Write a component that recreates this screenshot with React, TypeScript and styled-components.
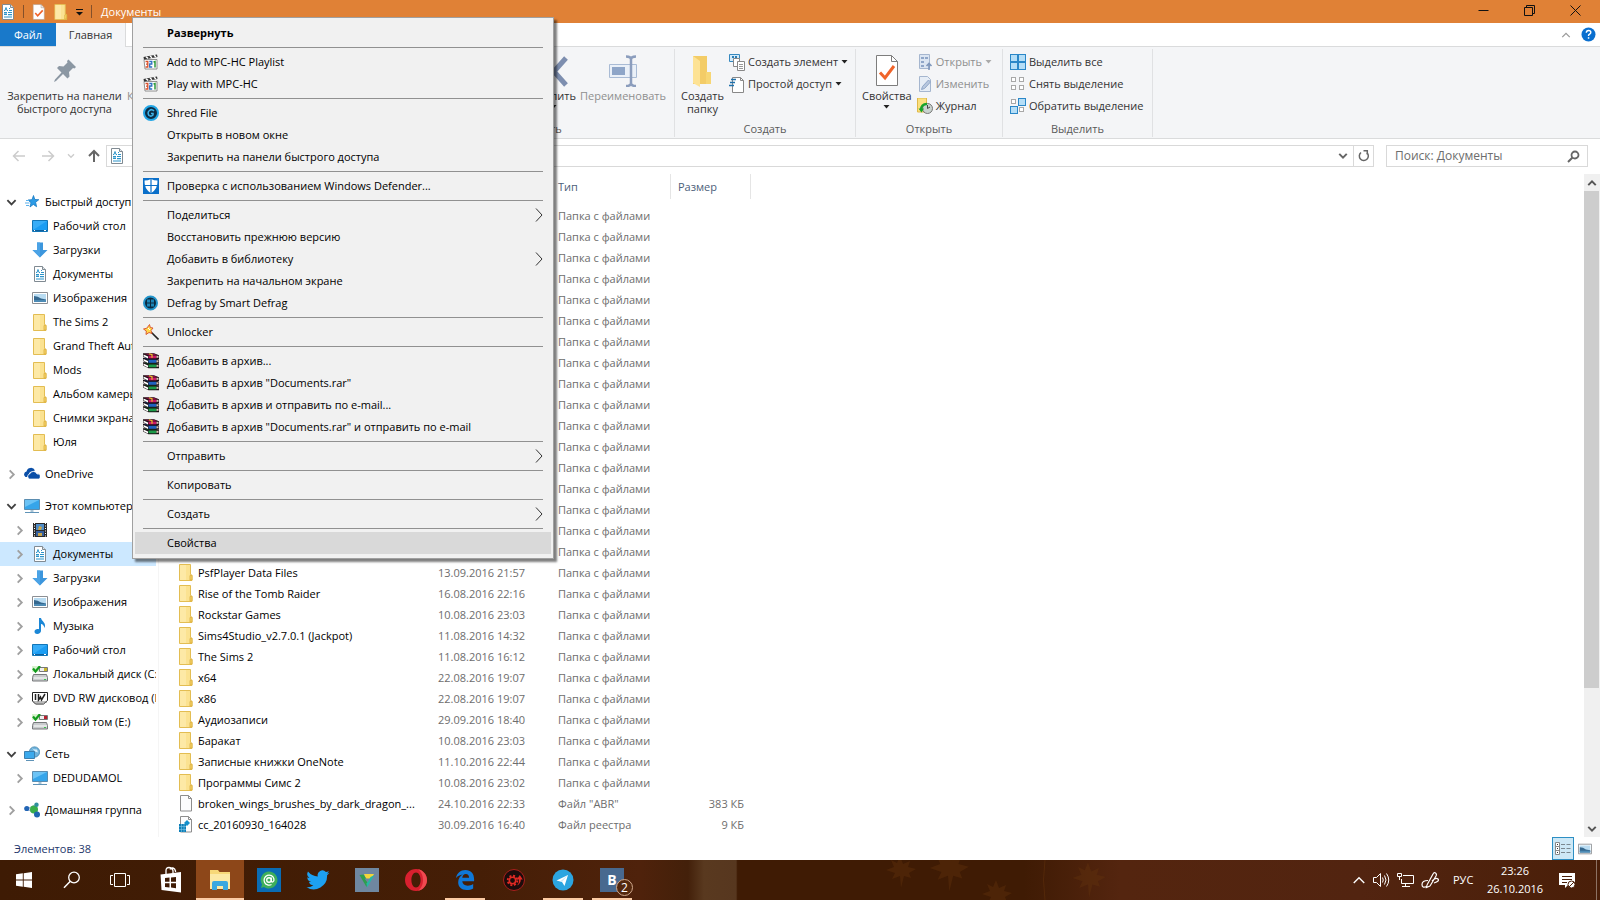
import React from "react";
import styled, { createGlobalStyle, css } from "styled-components";

const GlobalStyle = createGlobalStyle`
  *, *::before, *::after { box-sizing: border-box; }
  body { margin: 0; background: #fff; overflow: hidden; }
  body, button, input, table {
    font-family: "Open Sans", "Noto Sans", sans-serif;
    font-size: 11px;
    line-height: 16px;
    color: #000;
  }
  button { background: none; border: 0; padding: 0; margin: 0; text-align: left; white-space: nowrap; }
  svg { display: block; flex: none; }
  ul { list-style: none; margin: 0; padding: 0; }
`;

/* ---------- shell ---------- */

const Desktop = styled.div`
  position: relative;
  display: flex;
  flex-direction: column;
  height: 100vh;
  overflow: hidden;
`;

const TitleBar = styled.header`
  display: flex;
  align-items: center;
  flex: none;
  height: 23px;
  background: #e08136;
`;

const QuickAccess = styled.div`
  display: flex;
  align-items: center;
  gap: 7px;
  flex: 1;
`;

const QuickDivider = styled.span`
  width: 1px;
  height: 13px;
  background: #84502a;
`;

const WindowTitle = styled.h1`
  margin: 0 0 0 2px;
  font-size: 11px;
  font-weight: 400;
  color: #fff;
`;

const WindowControls = styled.div`
  display: flex;
  padding-right: 2px;
  button {
    display: flex;
    justify-content: center;
    width: 46px;
    padding-bottom: 3px;
  }
`;

/* ---------- ribbon ---------- */

const TabRow = styled.nav`
  display: flex;
  align-items: stretch;
  flex: none;
  height: 24px;
  border-bottom: 1px solid #dadbdc;
`;

const Tab = styled.button<{ $kind: "file" | "active" }>`
  text-align: center;
  ${(p) =>
    p.$kind === "file"
      ? css`
          width: 56px;
          background: #1979ca;
          color: #fff;
        `
      : css`
          width: 70px;
          background: #f4f5f7;
          color: #333;
          border-right: 1px solid #dadbdc;
          margin-bottom: -1px;
        `}
`;

const TabTools = styled.div`
  display: flex;
  align-items: center;
  gap: 10px;
  margin-left: auto;
  padding-right: 4px;
`;

const Ribbon = styled.div`
  display: flex;
  flex: none;
  height: 92px;
  background: #f4f5f7;
  border-bottom: 1px solid #dadbdc;
`;

const RibbonGroup = styled.section<{ $width: number; $plain?: boolean }>`
  display: flex;
  flex-direction: column;
  flex: none;
  width: ${(p) => p.$width}px;
  margin: 2px 0 1px;
  border-right: ${(p) => (p.$plain ? "0" : "1px solid #e0e1e3")};
`;

const GroupBody = styled.div<{ $end?: boolean }>`
  display: flex;
  flex: 1;
  justify-content: ${(p) => (p.$end ? "flex-end" : "flex-start")};
  padding: 2px ${(p) => (p.$end ? 6 : 4)}px 0;
`;

const GroupLabel = styled.div`
  height: 16px;
  text-align: center;
  color: #5a5a5a;
`;

const BigButton = styled.button<{ $dim?: boolean }>`
  display: flex;
  flex-direction: column;
  align-items: center;
  padding: 4px 2px 0;
  line-height: 13px;
  text-align: center;
  white-space: pre;
  color: ${(p) => (p.$dim ? "#8f8f8f" : "#333")};
  > svg { margin-bottom: 2px; }
  > svg + svg, > span + svg { margin: 3px 0 0; }
`;

const PinButton = styled(BigButton)`
  width: 121px;
`;

const SmallStack = styled.div`
  display: flex;
  flex-direction: column;
  align-items: flex-start;
  padding-left: 3px;
`;

const SmallButton = styled.button<{ $dim?: boolean }>`
  display: flex;
  align-items: center;
  gap: 3px;
  height: 22px;
  color: ${(p) => (p.$dim ? "#8f8f8f" : "#333")};
`;

/* ---------- address row ---------- */

const AddressRow = styled.div`
  display: flex;
  align-items: center;
  flex: none;
  height: 35px;
  padding: 0 12px 1px;
`;

const NavButtons = styled.div`
  display: flex;
  align-items: center;
  width: 94px;
  gap: 15px;
  button:nth-child(3) { margin: 0 -3px; }
`;

const AddressBox = styled.div`
  display: flex;
  align-items: center;
  flex: 1;
  height: 22px;
  margin-right: 12px;
  padding-left: 2px;
  border: 1px solid #d9d9d9;
  button {
    display: flex;
    align-items: center;
    justify-content: center;
    width: 20px;
    height: 20px;
  }
`;

const AddressSpace = styled.span`
  flex: 1;
`;

const RefreshButton = styled.button`
  border-left: 1px solid #d9d9d9;
`;

const SearchBox = styled.label`
  display: flex;
  align-items: center;
  width: 202px;
  height: 22px;
  padding: 0 7px 0 8px;
  border: 1px solid #d9d9d9;
  input {
    flex: 1;
    min-width: 0;
    padding: 0;
    border: 0;
    outline: 0;
    background: none;
    font-size: 12px;
  }
  input::placeholder { color: #6d6d6d; opacity: 1; }
`;

/* ---------- body ---------- */

const Body = styled.div`
  display: flex;
  flex: 1;
  min-height: 0;
`;

const Sidebar = styled.aside`
  flex: none;
  width: 159px;
  padding: 16px 2px 0 0;
  border-right: 1px solid #f5f5f5;
  overflow: hidden;
`;

const TreeGroup = styled.ul`
  margin-bottom: 8px;
`;

const TreeItem = styled.button<{ $level: number; $selected?: boolean }>`
  display: flex;
  align-items: center;
  width: 100%;
  height: 24px;
  padding-left: ${(p) => (p.$level ? 14 : 6)}px;
  overflow: hidden;
  background: ${(p) => (p.$selected ? "#cce8ff" : "transparent")};
  > svg + svg { margin: 0 5px 0 7px; }
`;

const Files = styled.main`
  flex: 1;
  min-width: 0;
  overflow: hidden;
`;

const FileTable = styled.table`
  width: 592px;
  table-layout: fixed;
  border-collapse: separate;
  border-spacing: 0;
  th {
    height: 25px;
    padding: 0 7px;
    font-weight: 400;
    text-align: left;
    color: #4c607a;
    border-right: 1px solid #e5e5e5;
  }
  th:empty { border: 0; }
  thead::after { content: ""; display: block; height: 6px; }
  td {
    height: 21px;
    padding: 0 7px;
    color: #6d6d6d;
    white-space: nowrap;
  }
  td:first-child { padding: 0 0 0 20px; color: #000; }
  td:last-child { text-align: right; }
`;

const FileName = styled.span`
  display: flex;
  align-items: center;
  gap: 5px;
`;

const Scrollbar = styled.div`
  display: flex;
  flex-direction: column;
  flex: none;
  width: 16px;
  background: #f0f0f0;
  button { display: flex; align-items: center; justify-content: center; height: 17px; }
`;

const Track = styled.div`
  flex: 1;
`;

const Thumb = styled.div`
  height: 79%;
  margin: 0 1px 0 0;
  background: #cdcdcd;
`;

const StatusBar = styled.footer`
  display: flex;
  align-items: center;
  flex: none;
  height: 23px;
  padding: 0 4px 0 14px;
  color: #23376b;
`;

const StatusText = styled.span`
  flex: 1;
`;

const ViewButton = styled.button<{ $on?: boolean }>`
  display: flex;
  align-items: center;
  justify-content: center;
  width: 22px;
  height: 23px;
  border: 1px solid ${(p) => (p.$on ? "#2d8fc4" : "transparent")};
  background: ${(p) => (p.$on ? "#cde8f6" : "transparent")};
`;

/* ---------- context menu ---------- */

const Menu = styled.div`
  position: absolute;
  left: 132px;
  top: 17px;
  width: 422px;
  padding: 4px 2px;
  background: #f1f1f1;
  border: 1px solid #a0a0a0;
  box-shadow: 3px 3px 2px rgba(0, 0, 0, 0.5);
`;

const MenuItem = styled.button<{ $bold?: boolean; $hover?: boolean }>`
  display: flex;
  align-items: center;
  width: 100%;
  height: 22px;
  padding: 0 8px;
  font-weight: ${(p) => (p.$bold ? 700 : 400)};
  background: ${(p) => (p.$hover ? "#d9d9d9" : "transparent")};
`;

const MenuIcon = styled.span`
  width: 16px;
  margin-right: 8px;
`;

const MenuText = styled.span`
  flex: 1;
`;

const MenuLine = styled.hr`
  height: 1px;
  margin: 3px 8px;
  border: 0;
  background: #919191;
`;

/* ---------- taskbar ---------- */

const Taskbar = styled.footer`
  position: relative;
  display: flex;
  flex: none;
  height: 40px;
  background: linear-gradient(90deg, #3e1b04 0%, #451e06 30%, #4f220b 40%, #43200a 43%, #59391f 44%, #57371f 46%, #3f1b04 46.1%, #3f1b04 64%, #54250f 70%, #522410 85%, #4a1f09 100%);
`;

const TaskbarArt = styled.svg`
  position: absolute;
  left: 50%;
  top: 0;
`;

const TaskButtons = styled.div`
  display: flex;
`;

const AppButtons = styled.div`
  display: flex;
  gap: 1px;
  margin-left: 3px;
`;

const TaskButton = styled.button<{ $open?: boolean; $current?: boolean }>`
  position: relative;
  display: flex;
  align-items: center;
  justify-content: center;
  width: 48px;
  height: 40px;
  background: ${(p) => (p.$current ? "#8d4719" : "transparent")};
  &::after {
    content: "";
    display: ${(p) => (p.$open || p.$current ? "block" : "none")};
    position: absolute;
    left: ${(p) => (p.$current ? 0 : 4)}px;
    right: ${(p) => (p.$current ? 0 : 4)}px;
    bottom: 0;
    height: 2px;
    background: #fbcba4;
  }
`;

const Badge = styled.span`
  position: absolute;
  left: 28px;
  top: 19px;
  width: 17px;
  height: 17px;
  border: 1px solid #d0a88c;
  border-radius: 9px;
  background: #54280d;
  color: #fff;
  font-size: 12px;
  line-height: 15px;
  text-align: center;
`;

const Tray = styled.div`
  position: relative;
  display: flex;
  align-items: center;
  margin-left: auto;
  color: #fff;
  button { color: #fff; }
`;

const TrayIcons = styled.div`
  display: flex;
  align-items: center;
  gap: 7px;
  padding-right: 14px;
`;

const Language = styled.button`
  width: 24px;
`;

const Clock = styled.button`
  width: 76px;
  line-height: 18px;
  text-align: center;
`;

const ActionCenter = styled.button`
  width: 43px;
  padding-left: 6px;
`;

const ShowDesktop = styled.button`
  width: 4px;
  height: 40px;
  border-left: 1px solid #8d7263;
`;

/* ---------- icons ---------- */

const FolderIcon = ({ w = 14, h = 17 }: { w?: number; h?: number }) => (
  <svg width={w} height={h} viewBox="0 0 14 17">
    <path d="M.5.5h11v10l1.500 1v5H.5z" fill="#fbe291" stroke="#e3bd52" />
    <path d="M1 1h6v15H1z" fill="#fde9a6" />
    <path d="M11 16V11.500l2-.5v5z" fill="#f6d368" stroke="#dcae3c" strokeWidth=".8" />
  </svg>
);

const DocIcon = () => (
  <svg width="16" height="16" viewBox="0 0 16 16">
    <path d="M2.500.5h8l3 3v12h-11z" fill="#fff" stroke="#808a92" />
    <path d="M10.500.5v3h3" fill="#dfe5ea" stroke="#808a92" />
    <path d="M4 6.500h1l1-3 1 3h1M9 4.500h1M9 6.500h3M4 8.500h3M8 8.500h4M4 10.500h3M8 10.500h4M4 13h8" stroke="#2d94c9" fill="none" />
    <path d="M4 9.500h3M8 12h4" stroke="#8cc7e6" />
  </svg>
);

const BlankDocIcon = ({ registry }: { registry?: boolean }) => (
  <svg width="14" height="17" viewBox="0 0 14 17">
    <path d="M1.500.5h8l3 3v12.500h-11z" fill="#fcfcfd" stroke="#8d8d8d" />
    <path d="M9.500.5v3h3" fill="none" stroke="#8d8d8d" />
    {registry && (
      <>
        <path d="M0 8h7v8H0z" fill="#0e7fb8" />
        <path d="M2.500 8v8M5 8v8M0 10.500h7M0 13.500h7" stroke="#7cc5e8" strokeWidth=".6" />
        <path d="M8 4l3 3-3 3-3-3z" fill="#1590cc" />
      </>
    )}
  </svg>
);

const StarIcon = () => (
  <svg width="16" height="16" viewBox="0 0 16 16">
    <path d="M9.500 1.500l1.300 4 4 .2-3.200 2.600 1 4.400-3.300-2.300L6 13l1-4.300L4 6l4-.3z" fill="#2b9be6" stroke="#1778c2" strokeWidth=".8" />
    <path d="M2 6.500h3M1 9h4.500M2 11.500h3" stroke="#5cb0ea" />
  </svg>
);

const DesktopIcon = () => (
  <svg width="16" height="16" viewBox="0 0 16 16">
    <path d="M.5 2.500h15v11H.5z" fill="#1b9df3" stroke="#1276b8" />
    <path d="M1 3h14L1 12z" fill="#37adf8" />
    <path d="M1 12.500h14" stroke="#0f5f9c" />
    <path d="M2 12.500h1M12 12.500h2" stroke="#fff" />
  </svg>
);

const DownloadIcon = () => (
  <svg width="16" height="16" viewBox="0 0 16 16">
    <path d="M5 .5h6V8h4.500L8 15.500.5 8H5z" fill="#3c96dd" />
    <path d="M5 .5h3v15L.5 8H5z" fill="#4ba3e6" />
  </svg>
);

const PictureIcon = ({ w = 16, h = 16 }: { w?: number; h?: number }) => (
  <svg width={w} height={h} viewBox="0 0 16 16">
    <path d="M.5 2.500h15v11H.5z" fill="#fff" stroke="#8c8f94" />
    <path d="M2 4h12v8H2z" fill="#b9dcf2" />
    <path d="M2 6q4 0 7 2.500l5 1V12H2z" fill="#35688f" />
    <path d="M2 10h12v2H2z" fill="#4d8bb5" />
  </svg>
);

const OneDriveIcon = () => (
  <svg width="16" height="16" viewBox="0 0 16 16">
    <path d="M1.500 11a3 3 0 0 1 1-5.500A4.500 4.500 0 0 1 11 4.500L6 6 3 11z" fill="#0b4fa8" />
    <path d="M5.500 13a2.700 2.700 0 0 1 .4-5.200A3.800 3.800 0 0 1 13 8a2.600 2.600 0 0 1 1.500 5z" fill="#0b4fa8" stroke="#fff" strokeWidth=".7" />
  </svg>
);

const PcIcon = () => (
  <svg width="16" height="16" viewBox="0 0 16 16">
    <path d="M.5 1.500h15v10H.5z" fill="#36a5ea" stroke="#5b8db0" />
    <path d="M1 2h14L1 9z" fill="#6cc3f5" />
    <path d="M6.500 12h3v2h-3z" fill="#a8c4d6" />
    <path d="M1 14.500h14" stroke="#5f93b7" />
  </svg>
);

const VideoIcon = () => (
  <svg width="16" height="16" viewBox="0 0 16 16">
    <path d="M1 1h14v14H1z" fill="#2a2a2a" />
    <path d="M4 2h8v6H4z" fill="#4f8cc7" />
    <path d="M4 9h8v5H4z" fill="#345f9e" />
    <path d="M7 4l3 1-1 3H6zM6 11h4v3H6z" fill="#c9a54a" />
    <path d="M2.500 1v14M13.500 1v14" stroke="#fff" strokeDasharray="1 1.500" />
  </svg>
);

const MusicIcon = () => (
  <svg width="16" height="16" viewBox="0 0 16 16">
    <path d="M7 0h2c.5 3 4 4 4 7.500 0 1-.3 2-.8 2.500C12.500 7.500 10 6 9 6v7c0 1.500-1.700 3-3.700 3S2.500 14.700 2.500 13.500 4 11 5.500 11c.6 0 1.500.2 1.500.2z" fill="#1b87d6" />
  </svg>
);

const DriveIcon = ({ color }: { color: string }) => (
  <svg width="16" height="16" viewBox="0 0 16 16">
    <path d="M7.500 1.500h8v4h-8z" fill="#eee" stroke="#777" />
    <path d="M12 2h3v3h-3z" fill={color} />
    <path d="M1.500 8.500h13l1 3v3.500H.5v-3.500z" fill="#c9ccce" stroke="#77797b" />
    <path d="M2 12h13" stroke="#fff" />
    <path d="M12 13.500h2" stroke="#39c24c" />
    <path d="M0 0h7v6H0z" fill="#d8f3cf" />
    <path d="M1 2.500l2.500 3L8 0" stroke="#129b1d" strokeWidth="2.200" fill="none" />
  </svg>
);

const DvdIcon = () => (
  <svg width="16" height="16" viewBox="0 0 16 16">
    <path d="M.5 2.500h15v8l-4 3.500h-8L.5 11z" fill="#fff" stroke="#222" />
    <path d="M3.500 4v6M6.500 4v6l2-3 1 3 3.500-6" fill="none" stroke="#222" strokeWidth="1.500" />
    <path d="M1 12h14" stroke="#777" />
  </svg>
);

const NetworkIcon = () => (
  <svg width="16" height="16" viewBox="0 0 16 16">
    <circle cx="10.500" cy="6" r="5.200" fill="#6fb3dc" stroke="#3f7fa8" strokeWidth=".7" />
    <path d="M8 2q2 2 5 1.500l1 3-3-1z" fill="#d8eefa" />
    <path d="M.5 5.500h10v7H.5z" fill="#3ba9ec" stroke="#3c7fae" />
    <path d="M2 14.500h8" stroke="#5f93b7" />
  </svg>
);

const HomegroupIcon = () => (
  <svg width="16" height="16" viewBox="0 0 16 16">
    <path d="M3 7l8-4M3 7l9 5" stroke="#9fb7c9" />
    <circle cx="2.800" cy="6.500" r="2.600" fill="#2265b5" />
    <circle cx="10" cy="7.500" r="4" fill="#3aae49" />
    <circle cx="12.500" cy="2.700" r="2.200" fill="#2f8f9c" />
    <circle cx="13" cy="12.500" r="3" fill="#1f66b0" />
  </svg>
);

type Dir = "up" | "down" | "right";

const Chevron = ({ dir, color = "#555", w = 11, weight = 2 }: { dir: Dir; color?: string; w?: number; weight?: number }) => (
  <svg width={w} height={w} viewBox="0 0 12 12">
    <path
      d={dir === "up" ? "M1.500 8.500L6 4l4.500 4.500" : dir === "down" ? "M1.500 3.500L6 8l4.500-4.500" : "M4 1.500L8.500 6 4 10.500"}
      fill="none"
      stroke={color}
      strokeWidth={weight}
    />
  </svg>
);

const Caret = ({ color = "#222" }: { color?: string }) => (
  <svg width="7" height="4" viewBox="0 0 7 4">
    <path d="M.5 0h6l-3 3.500z" fill={color} />
  </svg>
);

const Arrow = ({ kind, color }: { kind: "left" | "right" | "up"; color: string }) => (
  <svg width="14" height="14" viewBox="0 0 14 14">
    <path
      d={kind === "left" ? "M13 7H2M6.500 2L1.500 7l5 5" : kind === "right" ? "M1 7h11M7.500 2l5 5-5 5" : "M7 13V2M2 7l5-5 5 5"}
      fill="none"
      stroke={color}
      strokeWidth={kind === "up" ? 2 : 1.500}
    />
  </svg>
);

const TickDocIcon = ({ w, h }: { w: number; h: number }) => (
  <svg width={w} height={h} viewBox="0 0 24 30">
    <path d="M1 1h15l6 6v22H1z" fill="#fff" stroke="#b59a86" strokeWidth="1.200" />
    <path d="M16 1v6h6" fill="none" stroke="#9a8a7d" />
    <path d="M5 17l4.500 5L19 12" fill="none" stroke="#f0642a" strokeWidth="3" />
  </svg>
);

const ClapperIcon = () => (
  <svg width="16" height="16" viewBox="0 0 16 16">
    <path d="M1 5.500h13v9.500H2z" fill="#fff" stroke="#777" strokeWidth=".8" />
    <path d="M.5 3L14 .5l.5 2.500L1 5.500z" fill="#333" />
    <path d="M3 2.700l2 1.700M7 2l2 1.700M11 1.200l2 1.700" stroke="#fff" strokeWidth="1.500" />
    <path d="M2.500 7.500h2.300v2.700H3M4.800 10.200V13H2.500" fill="none" stroke="#d9502c" strokeWidth="1.300" />
    <path d="M6.300 7.500h2.500v2.500H6.700V13h2.500" fill="none" stroke="#2d6fc4" strokeWidth="1.300" />
    <path d="M10.500 8l1.500-.5v6" fill="none" stroke="#2f9b3c" strokeWidth="1.500" />
  </svg>
);

const ShredIcon = () => (
  <svg width="16" height="16" viewBox="0 0 16 16">
    <circle cx="8" cy="8" r="7" fill="#0c2c44" stroke="#22a6e6" strokeWidth="2" />
    <path d="M11 6Q9 3.500 6.500 5.500T6 10.500q2 1.500 4-.5V8.500H8" fill="none" stroke="#3fb4ea" strokeWidth="1.500" />
  </svg>
);

const DefenderIcon = () => (
  <svg width="16" height="16" viewBox="0 0 16 16">
    <path d="M0 0h16v16H0z" fill="#0a6fc9" />
    <path d="M1.500 2.500Q5 2.500 8 1q3 1.500 6.500 1.500Q15 11 8 15.200 1 11 1.500 2.500z" fill="#fff" />
    <path d="M8 1v14.500M1 7.500h14" stroke="#0a6fc9" strokeWidth="1.200" />
  </svg>
);

const DefragIcon = () => (
  <svg width="16" height="16" viewBox="0 0 16 16">
    <circle cx="7.500" cy="8" r="6.500" fill="#0b2a40" stroke="#2395cb" strokeWidth="2" />
    <path d="M4 4.500h3v3H4zM8 4.500h3v3H8zM4 8.500h3v3H4zM8 8.500h3v3H8z" fill="#1a86b8" />
  </svg>
);

const WandIcon = () => (
  <svg width="16" height="16" viewBox="0 0 16 16">
    <path d="M8 8l7.500 7.500" stroke="#222" strokeWidth="1.600" />
    <path d="M6.500.5l.8 3 2.700.5-2 2.500 1 3-3-1-3 2 .3-3.500L.5 5l3.300-.8z" fill="#ffd94a" stroke="#d8502a" strokeWidth=".9" />
    <path d="M5 4l2 2" stroke="#fff" />
  </svg>
);

const RarIcon = () => (
  <svg width="16" height="16" viewBox="0 0 16 16">
    {[
      ["#1a9a48", "#0a5a28", 10],
      ["#1f62c0", "#123a80", 5.5],
      ["#cc1766", "#8a0f40", 1],
    ].map(([c, d, y]) => (
      <g key={String(c)} transform={`translate(0 ${y})`}>
        <path d="M0-.8h11l5 2v4H5.500L0 2.500z" fill="#1c1014" />
        <path d="M1-.3h9.500L14.500 1H5z" fill={String(d)} />
        <path d="M5.500 1.500H13.500v2.800H5.500z" fill={String(c)} />
        <path d="M.5.6L5 2.600v1.900L.5 2.200z" fill="#fff" />
        <path d="M13.500 1.800h2v2h-2z" fill="#d9c4b4" />
      </g>
    ))}
    <path d="M6 .8l3 1v3" stroke="#e8c32a" strokeWidth="1.200" fill="none" />
  </svg>
);

const PinIcon = () => (
  <svg width="32" height="32" viewBox="0 0 32 32">
    <path d="M19.500 4.500L27 12l-1.500 1.500-1.500-.5-4 4 .5 4.500-2 2-4.500-4.500L7 26l-2 1 1-2.500 6.500-7-4.500-4.500 2-2 4.500.5 4-4-.5-1.500z" fill="#8b97a3" />
  </svg>
);

const DeleteIcon = () => (
  <svg width="32" height="32" viewBox="0 0 32 32">
    <path d="M4 3l24 27M28 3L4 30" stroke="#7d8eaf" strokeWidth="5" />
  </svg>
);

const RenameIcon = () => (
  <svg width="32" height="32" viewBox="0 0 32 32">
    <path d="M2.500 9.500h27v13h-27z" fill="#eaf0f8" stroke="#a9bbd5" />
    <path d="M5 12h13v8H5z" fill="#8ea5c8" />
    <path d="M24 4v25M19 1.500q5 0 5 3 0-3 5-3M19 31q5 0 5-3 0 3 5 3" fill="none" stroke="#8b9dbd" strokeWidth="2.500" />
  </svg>
);

const BigFolderIcon = () => (
  <svg width="32" height="32" viewBox="0 0 32 32">
    <path d="M7 1h14v17l4 1v10H7z" fill="#f3cc67" />
    <path d="M7 1l7 5v26l-7-4z" fill="#fde294" />
    <path d="M20 17h5v12h-5z" fill="#f7d674" />
  </svg>
);

const BigTickIcon = () => (
  <svg width="32" height="32" viewBox="0 0 32 32">
    <path d="M5.500.5h15l6 6v24h-21z" fill="#fff" stroke="#7d7d7d" />
    <path d="M20.500.5v6h6" fill="none" stroke="#7d7d7d" />
    <path d="M9 17.500l5 5.500 9-12" fill="none" stroke="#f0642a" strokeWidth="3" />
  </svg>
);

const NewItemIcon = () => (
  <svg width="16" height="17" viewBox="0 0 16 17">
    <path d="M.5.5h10v7H.5z" fill="#d4ebf9" stroke="#3588bf" />
    <path d="M3 3h2M6 3h2" stroke="#2b7db5" strokeWidth="2" />
    <path d="M4.500 4.500h6v8h-6z" fill="#fff" stroke="#888" />
    <path d="M8.500 7.500h7v9h-7z" fill="#fff" stroke="#888" />
    <path d="M10 10.500h4M10 12.500h4M10 14.500h4" stroke="#999" />
  </svg>
);

const EasyAccessIcon = () => (
  <svg width="16" height="17" viewBox="0 0 16 17">
    <path d="M3.500 1.500h8l3 3v12h-11z" fill="#fff" stroke="#888" />
    <path d="M11.500 1.500v3h3" fill="none" stroke="#888" />
    <path d="M2 3.500h5M1 6.500h5M0 9.500h5" stroke="#1f72ad" strokeWidth="1.400" />
  </svg>
);

const OpenIcon = () => (
  <svg width="16" height="16" viewBox="0 0 16 16">
    <path d="M2.500.5h10v14h-10z" fill="#dbe5f2" stroke="#a5b6cf" />
    <path d="M4 3h3v2H4zM4 7h3v2H4zM4 11h3v2H4zM8 3h3v2H8z" fill="#8fa6c8" />
    <path d="M12 16v-6M9.500 12L12 9.500l2.500 2.500" stroke="#7f97bb" strokeWidth="1.600" fill="none" />
  </svg>
);

const EditIcon = () => (
  <svg width="16" height="16" viewBox="0 0 16 16">
    <path d="M2.500.5h8l3 3v12h-11z" fill="#e6edf6" stroke="#a5b6cf" />
    <path d="M4.500 13.500l1-3 6-6.500 2 2-6 6.500z" fill="#b7c7de" stroke="#8fa6c8" />
  </svg>
);

const HistoryIcon = () => (
  <svg width="16" height="16" viewBox="0 0 16 16">
    <path d="M.5 0h9v14h-9z" fill="#fbe07e" stroke="#e0b94a" />
    <circle cx="10.500" cy="10.500" r="5" fill="#c9d3cf" stroke="#777" />
    <path d="M10.500 7v3.500l2.500-1.500" stroke="#444" fill="none" />
    <path d="M4 12q0-6 6-6" stroke="#16a32a" strokeWidth="2.400" fill="none" />
    <path d="M1.500 10.500l5.500 0-2.500 4z" fill="#16a32a" />
  </svg>
);

const SelectIcon = ({ on }: { on: number[] }) => (
  <svg width="16" height="16" viewBox="0 0 16 16">
    {[
      [1, 1],
      [9, 1],
      [1, 9],
      [9, 9],
    ].map(([x, y], i) =>
      on.includes(i) ? (
        <rect key={i} x={x - 0.5} y={y - 0.5} width="7" height="7" fill="#b5def7" stroke="#2a87c8" />
      ) : (
        <rect key={i} x={x + 0.5} y={y + 0.5} width="4" height="4" fill="#fff" stroke="#a8a8a8" />
      )
    )}
  </svg>
);

const HelpIcon = () => (
  <svg width="15" height="15" viewBox="0 0 15 15">
    <circle cx="7.500" cy="7.500" r="7" fill="#0a6fcf" />
    <path d="M5.300 5.800q0-2.300 2.300-2.300t2.200 2q0 1-1.200 1.700T7.500 9" fill="none" stroke="#fff" strokeWidth="1.400" />
    <path d="M6.800 10.200h1.500v1.500H6.800z" fill="#fff" />
  </svg>
);

/* ---------- content ---------- */

type Node = { text: string; icon: React.ReactNode; open?: boolean; selected?: boolean; leaf?: boolean };

const tree: Node[][] = [
  [
    { text: "Быстрый доступ", icon: <StarIcon />, open: true },
    { text: "Рабочий стол", icon: <DesktopIcon />, leaf: true },
    { text: "Загрузки", icon: <DownloadIcon />, leaf: true },
    { text: "Документы", icon: <DocIcon />, leaf: true },
    { text: "Изображения", icon: <PictureIcon />, leaf: true },
    { text: "The Sims 2", icon: <FolderIcon w={16} />, leaf: true },
    { text: "Grand Theft Auto", icon: <FolderIcon w={16} />, leaf: true },
    { text: "Mods", icon: <FolderIcon w={16} />, leaf: true },
    { text: "Альбом камеры", icon: <FolderIcon w={16} />, leaf: true },
    { text: "Снимки экрана", icon: <FolderIcon w={16} />, leaf: true },
    { text: "Юля", icon: <FolderIcon w={16} />, leaf: true },
  ],
  [{ text: "OneDrive", icon: <OneDriveIcon /> }],
  [
    { text: "Этот компьютер", icon: <PcIcon />, open: true },
    { text: "Видео", icon: <VideoIcon /> },
    { text: "Документы", icon: <DocIcon />, selected: true },
    { text: "Загрузки", icon: <DownloadIcon /> },
    { text: "Изображения", icon: <PictureIcon /> },
    { text: "Музыка", icon: <MusicIcon /> },
    { text: "Рабочий стол", icon: <DesktopIcon /> },
    { text: "Локальный диск (C:)", icon: <DriveIcon color="#c9b62a" /> },
    { text: "DVD RW дисковод (D:)", icon: <DvdIcon /> },
    { text: "Новый том (E:)", icon: <DriveIcon color="#b81f2e" /> },
  ],
  [
    { text: "Сеть", icon: <NetworkIcon />, open: true },
    { text: "DEDUDAMOL", icon: <PcIcon /> },
  ],
  [{ text: "Домашняя группа", icon: <HomegroupIcon /> }],
];

type FileRow = { name?: string; date?: string; type: string; size?: string; icon?: React.ReactNode };

const folder = (name: string, date: string): FileRow => ({ name, date, type: "Папка с файлами", icon: <FolderIcon /> });

const files: FileRow[] = [
  ...Array.from({ length: 17 }, () => ({ type: "Папка с файлами" })),
  folder("PsfPlayer Data Files", "13.09.2016 21:57"),
  folder("Rise of the Tomb Raider", "16.08.2016 22:16"),
  folder("Rockstar Games", "10.08.2016 23:03"),
  folder("Sims4Studio_v2.7.0.1 (Jackpot)", "11.08.2016 14:32"),
  folder("The Sims 2", "11.08.2016 16:12"),
  folder("x64", "22.08.2016 19:07"),
  folder("x86", "22.08.2016 19:07"),
  folder("Аудиозаписи", "29.09.2016 18:40"),
  folder("Баракат", "10.08.2016 23:03"),
  folder("Записные книжки OneNote", "11.10.2016 22:44"),
  folder("Программы Симс 2", "10.08.2016 23:02"),
  { name: "broken_wings_brushes_by_dark_dragon_...", date: "24.10.2016 22:33", type: 'Файл "ABR"', size: "383 КБ", icon: <BlankDocIcon /> },
  { name: "cc_20160930_164028", date: "30.09.2016 16:40", type: "Файл реестра", size: "9 КБ", icon: <BlankDocIcon registry /> },
];

type Entry = { text: string; icon?: React.ReactNode; bold?: boolean; sub?: boolean; hover?: boolean };

const menu: Entry[][] = [
  [{ text: "Развернуть", bold: true }],
  [
    { text: "Add to MPC-HC Playlist", icon: <ClapperIcon /> },
    { text: "Play with MPC-HC", icon: <ClapperIcon /> },
  ],
  [
    { text: "Shred File", icon: <ShredIcon /> },
    { text: "Открыть в новом окне" },
    { text: "Закрепить на панели быстрого доступа" },
  ],
  [{ text: "Проверка с использованием Windows Defender...", icon: <DefenderIcon /> }],
  [
    { text: "Поделиться", sub: true },
    { text: "Восстановить прежнюю версию" },
    { text: "Добавить в библиотеку", sub: true },
    { text: "Закрепить на начальном экране" },
    { text: "Defrag by Smart Defrag", icon: <DefragIcon /> },
  ],
  [{ text: "Unlocker", icon: <WandIcon /> }],
  [
    { text: "Добавить в архив...", icon: <RarIcon /> },
    { text: 'Добавить в архив "Documents.rar"', icon: <RarIcon /> },
    { text: "Добавить в архив и отправить по e-mail...", icon: <RarIcon /> },
    { text: 'Добавить в архив "Documents.rar" и отправить по e-mail', icon: <RarIcon /> },
  ],
  [{ text: "Отправить", sub: true }],
  [{ text: "Копировать" }],
  [{ text: "Создать", sub: true }],
  [{ text: "Свойства", hover: true }],
];

const ContextMenu = () => (
  <Menu role="menu">
    {menu.map((group, g) => (
      <React.Fragment key={g}>
        {g > 0 && <MenuLine />}
        {group.map((e) => (
          <MenuItem key={e.text} role="menuitem" $bold={e.bold} $hover={e.hover}>
            <MenuIcon>{e.icon}</MenuIcon>
            <MenuText>{e.text}</MenuText>
            {e.sub && (
              <svg width="8" height="14" viewBox="0 0 8 14">
                <path d="M1 .5L7 7l-6 6.500" fill="none" stroke="#333" />
              </svg>
            )}
          </MenuItem>
        ))}
      </React.Fragment>
    ))}
  </Menu>
);

type TaskApp = { name: string; icon: React.ReactNode; open?: boolean; current?: boolean };

const apps: TaskApp[] = [
  {
    name: "Магазин",
    icon: (
      <svg width="24" height="28" viewBox="0 0 24 28">
        <path d="M7 8V4.500q0-3 3-3t4 3V7M11 3.500q1-2 3-1.500t2.500 3V6" fill="none" stroke="#fff" strokeWidth="1.300" />
        <path d="M1.500 8.500L22 6v20.500L2.500 24z" fill="#fff" />
        <path d="M6 12l4.500-.4v4.200H6zM12 11.400l5-.5v4.900h-5zM6 17.200h4.500v4.200L6 21zM12 17.200h5v5l-5-.6z" fill="#3f1b04" />
      </svg>
    ),
  },
  {
    name: "Проводник",
    current: true,
    icon: (
      <svg width="22" height="24" viewBox="0 0 22 24">
        <path d="M1 2h8l1.500 2H21v17H1z" fill="#f7d878" />
        <path d="M1 6h20v15H1z" fill="#fce9a5" />
        <path d="M3 22v-7q0-2 2-2h12q2 0 2 2v7h-5v-4H8v4z" fill="#3aa7e0" />
      </svg>
    ),
  },
  {
    name: "Агент",
    icon: (
      <svg width="24" height="24" viewBox="0 0 24 24">
        <path d="M0 0h24v24H0z" fill="#0a6cb4" />
        <path d="M12 3.500a8.500 8.500 0 1 1-5 15.400L4 20l1-3.500A8.500 8.500 0 0 1 12 3.500z" fill="#3eae5b" />
        <circle cx="12" cy="12" r="2.300" fill="none" stroke="#fff" strokeWidth="1.400" />
        <path d="M14.300 9.500v3.500q.4 1.500 1.700.8t.9-3A5 5 0 1 0 14.500 16.500" fill="none" stroke="#fff" strokeWidth="1.300" />
      </svg>
    ),
  },
  {
    name: "Twitter",
    icon: (
      <svg width="24" height="24" viewBox="0 0 24 24">
        <path d="M23.500 4.800a9.500 9.500 0 0 1-2.700.8 4.700 4.700 0 0 0 2.100-2.600 9.500 9.500 0 0 1-3 1.100 4.700 4.700 0 0 0-8.100 4.300A13.400 13.400 0 0 1 2 3.500a4.700 4.700 0 0 0 1.500 6.300 4.700 4.700 0 0 1-2.200-.6 4.700 4.700 0 0 0 3.800 4.700 4.700 4.700 0 0 1-2.100.1 4.700 4.700 0 0 0 4.400 3.300A9.500 9.500 0 0 1 .5 19.200a13.400 13.400 0 0 0 20.600-11.900 9.500 9.500 0 0 0 2.400-2.500z" fill="#1da1f2" />
      </svg>
    ),
  },
  {
    name: "Диск",
    icon: (
      <svg width="24" height="24" viewBox="0 0 24 24">
        <path d="M0 0h24v24H0z" fill="#6f87a0" />
        <path d="M9 6h10l-2.500 5H11z" fill="#f4d53a" />
        <path d="M4.500 7l4-.5L13.500 14l-2 5z" fill="#2f9e4e" />
        <path d="M19.500 7L12 19.500l-.5-4L15.500 9z" fill="#28b6a6" />
        <path d="M9.500 10.500h5.500l-2.500 4z" fill="#6f87a0" />
      </svg>
    ),
  },
  {
    name: "Opera",
    icon: (
      <svg width="24" height="24" viewBox="0 0 24 24">
        <path fillRule="evenodd" d="M12 1c6 0 11 4.700 11 11s-5 11-11 11S1 18.300 1 12 6 1 12 1zm0 3.500c-2.700 0-4.600 3.400-4.600 7.500s1.900 7.500 4.600 7.500 4.600-3.400 4.600-7.500-1.900-7.500-4.600-7.500z" fill="#d8202f" />
        <path d="M14 1.200c5 1 9 5.300 9 10.800s-4 9.800-9 10.800c2.500-1.500 5-5.500 5-10.800S16.500 2.700 14 1.200z" fill="#f04a50" />
      </svg>
    ),
  },
  {
    name: "Edge",
    open: true,
    icon: (
      <svg width="20" height="22" viewBox="0 0 22 24">
        <path d="M1 10C2 4.500 6 1 11.500 1 17.500 1 21 5 21 11v2.500H8c.2 3 2.500 4.700 6 4.700 2.200 0 4.200-.6 6-1.700v4.800c-2 1.200-4.500 1.700-7.300 1.700C7 23 3.500 19.500 3.500 14.500c0-4 2.200-7 5-8.500C5.500 6.300 2.500 7.700 1 10zm7-.5h7.500c0-2.700-1.300-4.200-3.600-4.200S8.300 7 8 9.500z" fill="#0f78d8" />
      </svg>
    ),
  },
  {
    name: "Game Booster",
    icon: (
      <svg width="24" height="24" viewBox="0 0 24 24">
        <circle cx="12" cy="12" r="10.500" fill="#1c0c0c" stroke="#a8201c" />
        <circle cx="10.500" cy="12.500" r="3.200" fill="none" stroke="#e02a24" strokeWidth="1.600" />
        <circle cx="10.500" cy="12.500" r="4.800" fill="none" stroke="#e02a24" strokeWidth="1.800" strokeDasharray="2 1.770" />
        <path d="M15 17.500q2.500-2.500 2-6h-2.200l3-4.500 3 4.500h-2q0 4-3.800 6z" fill="#e02a24" />
      </svg>
    ),
  },
  {
    name: "Telegram",
    open: true,
    icon: (
      <svg width="24" height="24" viewBox="0 0 24 24">
        <circle cx="12" cy="12" r="10.500" fill="#2ca5e0" />
        <path d="M5.500 12.500L17 7l-3.500 11-2.500-4z" fill="#fff" />
        <path d="M11 14L17 7l-7.500 6z" fill="#cfe8f6" />
      </svg>
    ),
  },
];

const VkTile = styled.span`
  width: 24px;
  height: 24px;
  background: #48698f;
  color: #fff;
  font-size: 14px;
  line-height: 24px;
  font-weight: 700;
  text-align: center;
`;

const Leaf = ({ x, y, s }: { x: number; y: number; s: number }) => (
  <path transform={`translate(${x} ${y}) scale(${s})`} d="M0-14l3 8 7-3-2 6 8 2-7 4 2 5-7-2-3 12-1-12-8 3 3-6-9-3 8-3-3-7 6 3z" fill="#66370f" opacity=".35" />
);

export default function App() {
  return (
    <>
      <GlobalStyle />
      <Desktop>
        <TitleBar>
          <QuickAccess>
            <DocIcon />
            <QuickDivider />
            <TickDocIcon w={16} h={16} />
            <FolderIcon w={14} h={16} />
            <svg width="9" height="8" viewBox="0 0 9 8">
              <path d="M1 1.500h7" stroke="#111" />
              <path d="M1 4h7L4.500 7.500z" fill="#111" />
            </svg>
            <QuickDivider />
            <WindowTitle>Документы</WindowTitle>
          </QuickAccess>
          <WindowControls>
            <button aria-label="Свернуть">
              <svg width="11" height="11" viewBox="0 0 11 11"><path d="M.5 5.500h10" stroke="#111" /></svg>
            </button>
            <button aria-label="Свернуть в окно">
              <svg width="11" height="11" viewBox="0 0 11 11"><path d="M.5 2.500h8v8h-8zM2.500 2.500v-2h8v8h-2" fill="none" stroke="#111" /></svg>
            </button>
            <button aria-label="Закрыть">
              <svg width="11" height="11" viewBox="0 0 11 11"><path d="M.5.500l10 10M10.500.500l-10 10" stroke="#111" /></svg>
            </button>
          </WindowControls>
        </TitleBar>

        <TabRow>
          <Tab $kind="file">Файл</Tab>
          <Tab $kind="active">Главная</Tab>
          <TabTools>
            <Chevron dir="up" color="#999" w={10} weight={1.5} />
            <HelpIcon />
          </TabTools>
        </TabRow>

        <Ribbon>
          <RibbonGroup $width={378} $plain>
            <GroupBody>
              <PinButton>
                <PinIcon />
                <span>{"Закрепить на панели\nбыстрого доступа"}</span>
              </PinButton>
              <BigButton $dim>
                <svg width="32" height="32" />
                <span>Копировать</span>
              </BigButton>
            </GroupBody>
          </RibbonGroup>
          <RibbonGroup $width={297}>
            <GroupBody $end>
              <BigButton>
                <DeleteIcon />
                <span>Удалить</span>
                <Caret />
              </BigButton>
              <BigButton $dim>
                <RenameIcon />
                <span>Переименовать</span>
              </BigButton>
            </GroupBody>
            <GroupLabel>Упорядочить</GroupLabel>
          </RibbonGroup>
          <RibbonGroup $width={181}>
            <GroupBody>
              <BigButton>
                <BigFolderIcon />
                <span>{"Создать\nпапку"}</span>
              </BigButton>
              <SmallStack>
                <SmallButton><NewItemIcon />Создать элемент<Caret /></SmallButton>
                <SmallButton><EasyAccessIcon />Простой доступ<Caret /></SmallButton>
              </SmallStack>
            </GroupBody>
            <GroupLabel>Создать</GroupLabel>
          </RibbonGroup>
          <RibbonGroup $width={147}>
            <GroupBody>
              <BigButton>
                <BigTickIcon />
                <span>Свойства</span>
                <Caret />
              </BigButton>
              <SmallStack>
                <SmallButton $dim><OpenIcon />Открыть<Caret color="#aaa" /></SmallButton>
                <SmallButton $dim><EditIcon />Изменить</SmallButton>
                <SmallButton><HistoryIcon />Журнал</SmallButton>
              </SmallStack>
            </GroupBody>
            <GroupLabel>Открыть</GroupLabel>
          </RibbonGroup>
          <RibbonGroup $width={150}>
            <GroupBody>
              <SmallStack>
                <SmallButton><SelectIcon on={[0, 1, 2, 3]} />Выделить все</SmallButton>
                <SmallButton><SelectIcon on={[]} />Снять выделение</SmallButton>
                <SmallButton><SelectIcon on={[1, 2]} />Обратить выделение</SmallButton>
              </SmallStack>
            </GroupBody>
            <GroupLabel>Выделить</GroupLabel>
          </RibbonGroup>
        </Ribbon>

        <AddressRow>
          <NavButtons>
            <button aria-label="Назад"><Arrow kind="left" color="#ccc" /></button>
            <button aria-label="Вперёд"><Arrow kind="right" color="#ccc" /></button>
            <button aria-label="Последние расположения"><Chevron dir="down" color="#ccc" w={8} /></button>
            <button aria-label="Вверх"><Arrow kind="up" color="#666" /></button>
          </NavButtons>
          <AddressBox>
            <DocIcon />
            <AddressSpace />
            <button aria-label="Список адресов"><Chevron dir="down" color="#666" w={10} weight={2.4} /></button>
            <RefreshButton aria-label="Обновить">
              <svg width="12" height="12" viewBox="0 0 12 12">
                <path d="M3 2.500A4.500 4.500 0 1 0 9 2.800" fill="none" stroke="#666" strokeWidth="1.500" />
                <path d="M5.500 .8h3.800v3.800" fill="none" stroke="#666" strokeWidth="1.500" />
              </svg>
            </RefreshButton>
          </AddressBox>
          <SearchBox>
            <input type="text" placeholder="Поиск: Документы" aria-label="Поиск: Документы" />
            <svg width="13" height="13" viewBox="0 0 13 13">
              <circle cx="8" cy="5" r="3.500" fill="none" stroke="#666" strokeWidth="1.800" />
              <path d="M5.500 7.500L1 12" stroke="#666" strokeWidth="2" />
            </svg>
          </SearchBox>
        </AddressRow>

        <Body>
          <Sidebar>
            {tree.map((group, g) => (
              <TreeGroup key={g}>
                {group.map((n, i) => (
                  <li key={i}>
                    <TreeItem $level={i} $selected={n.selected}>
                      {n.leaf ? <svg width="11" height="11" /> : <Chevron dir={n.open ? "down" : "right"} color={n.open ? "#404040" : "#a0a0a0"} />}
                      {n.icon}
                      {n.text}
                    </TreeItem>
                  </li>
                ))}
              </TreeGroup>
            ))}
          </Sidebar>
          <Files>
            <FileTable>
              <colgroup>
                <col style={{ width: 272 }} />
                <col style={{ width: 120 }} />
                <col style={{ width: 120 }} />
                <col style={{ width: 80 }} />
              </colgroup>
              <thead>
                <tr>
                  <th />
                  <th />
                  <th>Тип</th>
                  <th>Размер</th>
                </tr>
              </thead>
              <tbody>
                {files.map((f, i) => (
                  <tr key={i}>
                    <td>{f.name && <FileName>{f.icon}{f.name}</FileName>}</td>
                    <td>{f.date}</td>
                    <td>{f.type}</td>
                    <td>{f.size}</td>
                  </tr>
                ))}
              </tbody>
            </FileTable>
          </Files>
          <Scrollbar>
            <button aria-label="Прокрутить вверх"><Chevron dir="up" w={10} weight={2.4} /></button>
            <Track><Thumb /></Track>
            <button aria-label="Прокрутить вниз"><Chevron dir="down" w={10} weight={2.4} /></button>
          </Scrollbar>
        </Body>

        <StatusBar>
          <StatusText>Элементов: 38</StatusText>
          <ViewButton $on aria-label="Таблица">
            <svg width="18" height="13" viewBox="0 0 18 13">
              <path d="M1.500.5h4v12h-4z" fill="#fff" stroke="#8a8a8a" />
              <path d="M1.500 4.500h4M1.500 8.500h4" stroke="#8a8a8a" />
              <path d="M3 2.500h1M3 6.500h1M3 10.500h1" stroke="#333" />
              <path d="M7 2.500h4M12.500 2.500h4M7 6.500h4M12.500 6.500h4M7 10.500h4M12.500 10.500h4" stroke="#7a8890" />
            </svg>
          </ViewButton>
          <ViewButton aria-label="Крупные значки"><PictureIcon w={14} h={14} /></ViewButton>
        </StatusBar>

        <Taskbar>
          <TaskbarArt width="400" height="40" viewBox="0 0 400 40">
            <Leaf x={100} y={10} s={1} />
            <Leaf x={148} y={8} s={1.3} />
            <Leaf x={196} y={34} s={1} />
            <Leaf x={288} y={18} s={1.1} />
            <path d="M245 0q-3 20 0 40" stroke="#6b3a10" fill="none" opacity=".4" />
          </TaskbarArt>
          <TaskButtons>
            <TaskButton aria-label="Пуск">
              <svg width="16" height="16" viewBox="0 0 16 16">
                <path d="M0 2.300l6.800-1v6.300H0zM7.700 1.200L16 0v7.600H7.700zM0 8.400h6.800v6.300l-6.800-1zM7.700 8.400H16V16l-8.300-1.200z" fill="#fff" />
              </svg>
            </TaskButton>
            <TaskButton aria-label="Поиск">
              <svg width="18" height="18" viewBox="0 0 18 18">
                <circle cx="11" cy="6.500" r="5.300" fill="none" stroke="#fff" strokeWidth="1.300" />
                <path d="M7.300 10.300L1 16.800" stroke="#fff" strokeWidth="1.500" />
              </svg>
            </TaskButton>
            <TaskButton aria-label="Представление задач">
              <svg width="20" height="16" viewBox="0 0 20 16">
                <path d="M4.500 1.500h11v13h-11zM3 3.500H.5v9H3M17 3.500h2.500v9H17" fill="none" stroke="#fff" />
              </svg>
            </TaskButton>
            <AppButtons>
              {apps.map((a) => (
                <TaskButton key={a.name} aria-label={a.name} $open={a.open} $current={a.current}>
                  {a.icon}
                </TaskButton>
              ))}
              <TaskButton aria-label="ВКонтакте" $open>
                <VkTile>В</VkTile>
                <Badge>2</Badge>
              </TaskButton>
            </AppButtons>
          </TaskButtons>
          <Tray>
            <TrayIcons>
              <Chevron dir="up" color="#fff" w={14} weight={1.2} />
              <svg width="17" height="16" viewBox="0 0 17 16">
                <path d="M.5 5.500h3l4-4v13l-4-4h-3z" fill="none" stroke="#fff" />
                <path d="M9.500 5.500q1.500 2.500 0 5M11.500 3.500q3 4.500 0 9M13.500 1.500q4.500 6.500 0 13" fill="none" stroke="#fff" />
              </svg>
              <svg width="17" height="16" viewBox="0 0 17 16">
                <path d="M6 3.500h10.500v8H4.500V7M5 14.500h8M8.500 12v2" fill="none" stroke="#fff" />
                <path d="M.5 1.500h4v3h-4zM2.500 5v3" fill="none" stroke="#fff" />
              </svg>
              <svg width="18" height="18" viewBox="0 0 18 18">
                <path d="M6 14l6-11q1-2 2.500-1t.5 3L9 15M6 14l-.5 2.500L9 15M7 9.500q-6 0-6 4t4.500 2M11 10q4-4 6-2t-4 4" fill="none" stroke="#fff" strokeWidth="1.200" />
              </svg>
            </TrayIcons>
            <Language>РУС</Language>
            <Clock>23:26<br />26.10.2016</Clock>
            <ActionCenter aria-label="Центр уведомлений">
              <svg width="17" height="17" viewBox="0 0 17 17">
                <path d="M0 1h16v12H9l-3 3v-3H0z" fill="#fff" />
                <path d="M3 4.500h10M3 7.500h10M3 10.500h5" stroke="#4a1f09" />
                <circle cx="12.500" cy="12.500" r="3.500" fill="#fff" stroke="#4a1f09" />
                <path d="M10 15l5-5" stroke="#4a1f09" />
              </svg>
            </ActionCenter>
            <ShowDesktop aria-label="Показать рабочий стол" />
          </Tray>
        </Taskbar>

        <ContextMenu />
      </Desktop>
    </>
  );
}
